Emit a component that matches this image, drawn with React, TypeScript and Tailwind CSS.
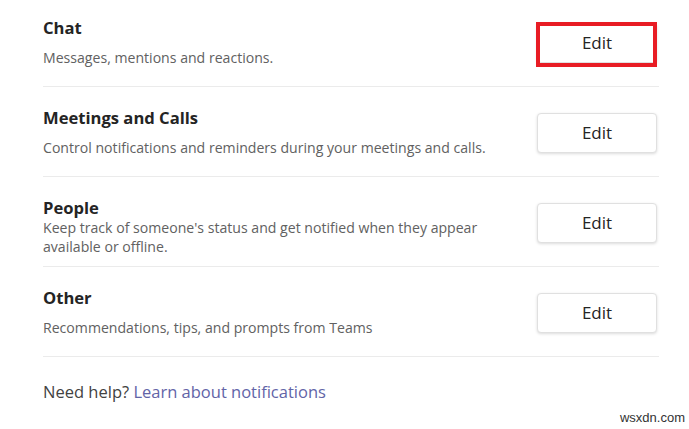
const sections = [
  { title: "Chat", desc: "Messages, mentions and reactions.", marked: true },
  { title: "Meetings and Calls", desc: "Control notifications and reminders during your meetings and calls." },
  { title: "People", desc: "Keep track of someone's status and get notified when they appear available or offline." },
  { title: "Other", desc: "Recommendations, tips, and prompts from Teams" },
];

const Row = ({ title, desc, marked }: { title: string; desc: string; marked?: boolean }) => {
  return (
    <div className="flex h-[90px] items-start justify-between border-b border-[#ebebeb] pt-5">
      <div className="flex w-[460px] flex-col">
        <span className="h-[22px] text-[16.6px] font-bold leading-[22px] text-[#242424]">{title}</span>
        <div className="flex h-[36px] items-center">
          <p className="text-[14.1px] leading-[19px] text-[#616161]">{desc}</p>
        </div>
      </div>
      <div className="relative mr-[2px] mt-[6px]">
        <button className="h-10 w-[120px] rounded-[4px] border border-[#e0e0e0] bg-white text-[17px] font-medium text-[#242424] shadow-[0_1px_3px_rgba(0,0,0,0.14)]">
          Edit
        </button>
        {marked && <span className="absolute -left-px -top-px right-0 -bottom-[4px] border-4 border-[#e81c24]" />}
      </div>
    </div>
  );
};

const App = () => {
  return (
    <div className="relative h-[429px] w-[689px] overflow-hidden bg-white font-['Segoe_UI','Open_Sans',sans-serif]">
      <div className="ml-[43px] -mt-[3px] w-[616px]">
        {sections.map((s) => (
          <Row key={s.title} title={s.title} desc={s.desc} marked={s.marked} />
        ))}
        <p className="pt-[24px] text-[16.5px] leading-[22px] text-[#424242]">
          Need help? <a className="text-[#6264a7]">Learn about notifications</a>
        </p>
      </div>
      <span className="absolute bottom-[2px] right-[4px] font-['Liberation_Sans_Narrow','Liberation_Sans',sans-serif] text-[13px] text-[#333]">
        wsxdn.com
      </span>
    </div>
  );
};

export default App;
